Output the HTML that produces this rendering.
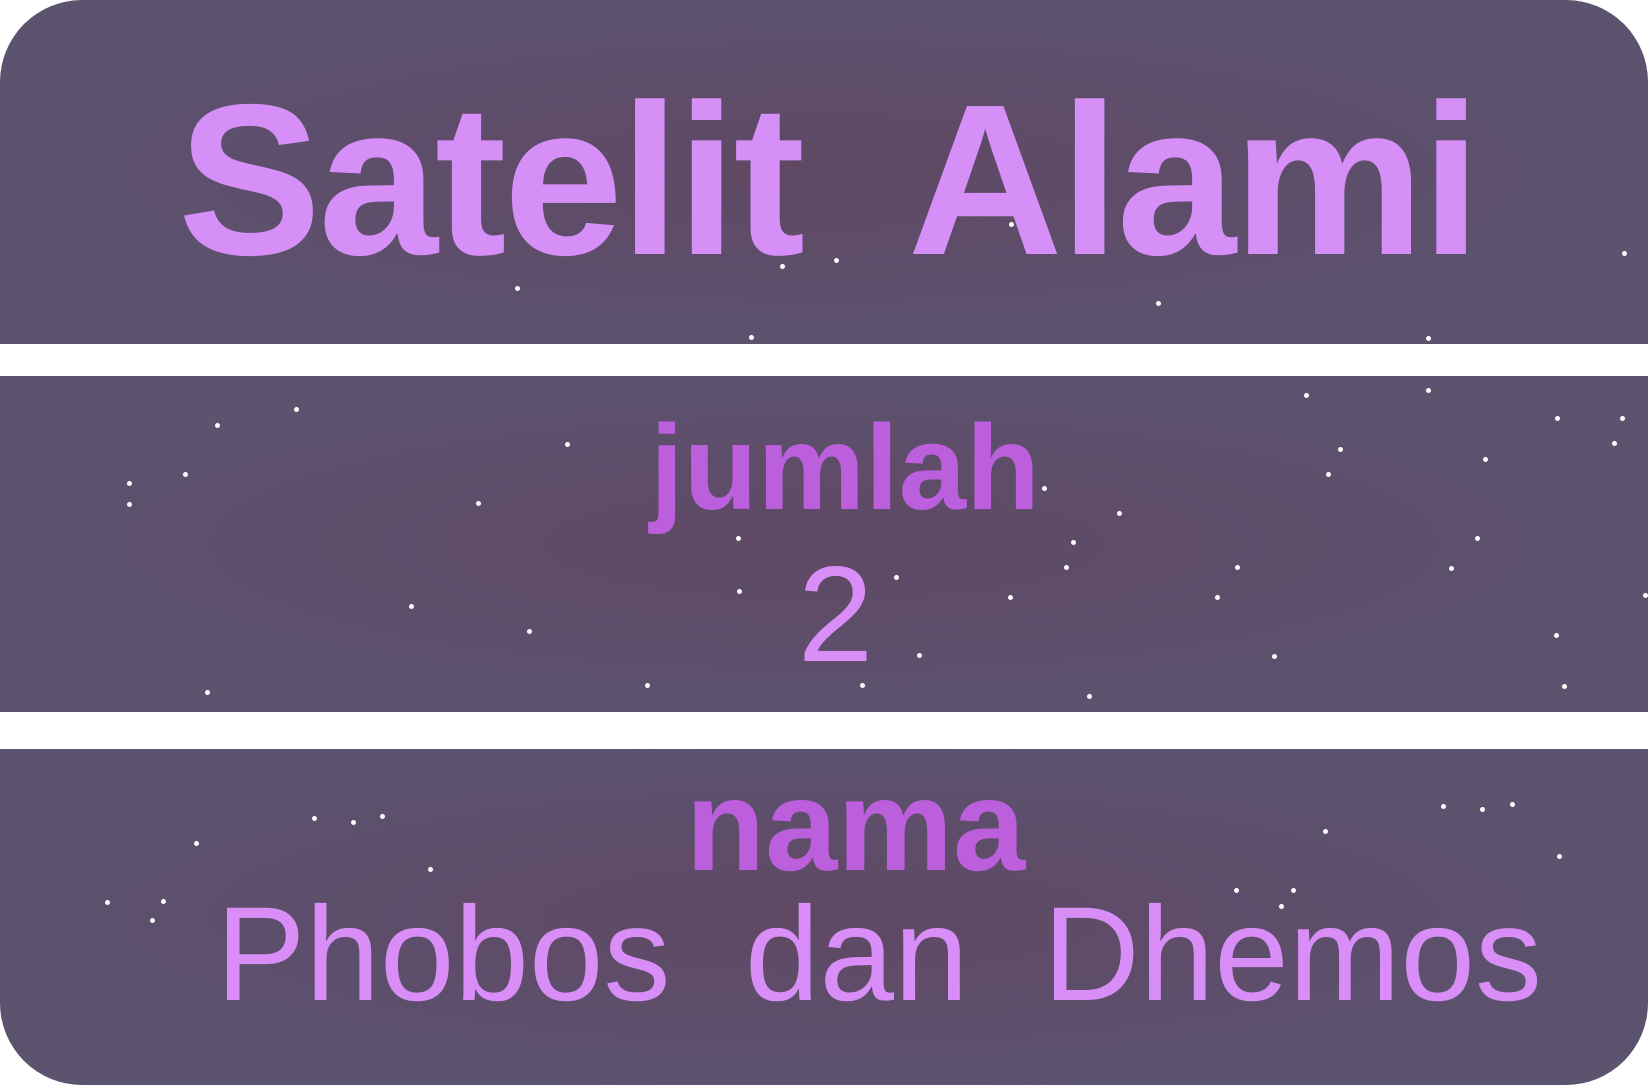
<!DOCTYPE html>
<html><head><meta charset="utf-8"><style>
html,body{margin:0;padding:0;background:#fff;width:1648px;height:1086px;overflow:hidden}
.p{position:absolute;left:0;width:1648px;background:radial-gradient(ellipse at 50% 50%,#5f4863 0%,#5d4f6c 50%,#5c546f 80%);overflow:hidden}
.t{position:absolute;left:0;width:1648px;text-align:center;font-family:"Liberation Sans",sans-serif;white-space:nowrap;line-height:1;box-sizing:border-box}
.s{position:absolute;width:5px;height:5px;border-radius:50%;background:#fff}
</style></head><body>
<div class="p" style="top:0;height:344px;border-radius:82px 82px 0 0">
<div class="t" style="top:72px;font-size:215px;font-weight:bold;color:#d78ff8;letter-spacing:-3px;padding-left:8px">Satelit&nbsp; Alami</div>
</div>
<div class="p" style="top:376px;height:336px">
<div class="t" style="top:31px;font-size:121px;font-weight:bold;color:#bb5fdc;padding-left:42px">jumlah</div>
<div class="t" style="top:170px;font-size:136px;color:#d88ef6;padding-left:23px">2</div>
</div>
<div class="p" style="top:749px;height:336px;border-radius:0 0 82px 82px">
<div class="t" style="top:11px;font-size:130px;font-weight:bold;color:#bb5fdc;padding-left:63px">nama</div>
<div class="t" style="top:139px;font-size:134px;color:#d88ef6;letter-spacing:0px;padding-left:110px">Phobos&nbsp; dan&nbsp; Dhemos</div>
</div>
<div class="s" style="left:515px;top:286px"></div><div class="s" style="left:749px;top:335px"></div>
<div class="s" style="left:780px;top:264px"></div><div class="s" style="left:834px;top:258px"></div>
<div class="s" style="left:1156px;top:301px"></div><div class="s" style="left:1426px;top:336px"></div>
<div class="s" style="left:1622px;top:251px"></div><div class="s" style="left:1009px;top:222px"></div>
<div class="s" style="left:127px;top:481px"></div><div class="s" style="left:127px;top:502px"></div>
<div class="s" style="left:183px;top:472px"></div><div class="s" style="left:215px;top:423px"></div>
<div class="s" style="left:294px;top:407px"></div><div class="s" style="left:476px;top:501px"></div>
<div class="s" style="left:565px;top:442px"></div><div class="s" style="left:409px;top:604px"></div>
<div class="s" style="left:527px;top:629px"></div><div class="s" style="left:205px;top:690px"></div>
<div class="s" style="left:645px;top:683px"></div><div class="s" style="left:736px;top:536px"></div>
<div class="s" style="left:737px;top:589px"></div><div class="s" style="left:894px;top:575px"></div>
<div class="s" style="left:917px;top:653px"></div><div class="s" style="left:860px;top:683px"></div>
<div class="s" style="left:1008px;top:595px"></div><div class="s" style="left:1087px;top:694px"></div>
<div class="s" style="left:1042px;top:486px"></div><div class="s" style="left:1117px;top:511px"></div>
<div class="s" style="left:1071px;top:540px"></div><div class="s" style="left:1064px;top:565px"></div>
<div class="s" style="left:1235px;top:565px"></div><div class="s" style="left:1215px;top:595px"></div>
<div class="s" style="left:1272px;top:654px"></div><div class="s" style="left:1304px;top:393px"></div>
<div class="s" style="left:1338px;top:447px"></div><div class="s" style="left:1326px;top:472px"></div>
<div class="s" style="left:1426px;top:388px"></div><div class="s" style="left:1483px;top:457px"></div>
<div class="s" style="left:1449px;top:566px"></div><div class="s" style="left:1475px;top:536px"></div>
<div class="s" style="left:1555px;top:416px"></div><div class="s" style="left:1612px;top:441px"></div>
<div class="s" style="left:1620px;top:416px"></div><div class="s" style="left:1554px;top:633px"></div>
<div class="s" style="left:1562px;top:684px"></div><div class="s" style="left:1643px;top:593px"></div>
<div class="s" style="left:194px;top:841px"></div><div class="s" style="left:312px;top:816px"></div>
<div class="s" style="left:351px;top:820px"></div><div class="s" style="left:380px;top:814px"></div>
<div class="s" style="left:428px;top:867px"></div><div class="s" style="left:105px;top:900px"></div>
<div class="s" style="left:161px;top:899px"></div><div class="s" style="left:150px;top:918px"></div>
<div class="s" style="left:1323px;top:829px"></div><div class="s" style="left:1441px;top:804px"></div>
<div class="s" style="left:1480px;top:807px"></div><div class="s" style="left:1510px;top:802px"></div>
<div class="s" style="left:1557px;top:854px"></div><div class="s" style="left:1234px;top:888px"></div>
<div class="s" style="left:1291px;top:888px"></div><div class="s" style="left:1279px;top:904px"></div>
</body></html>
